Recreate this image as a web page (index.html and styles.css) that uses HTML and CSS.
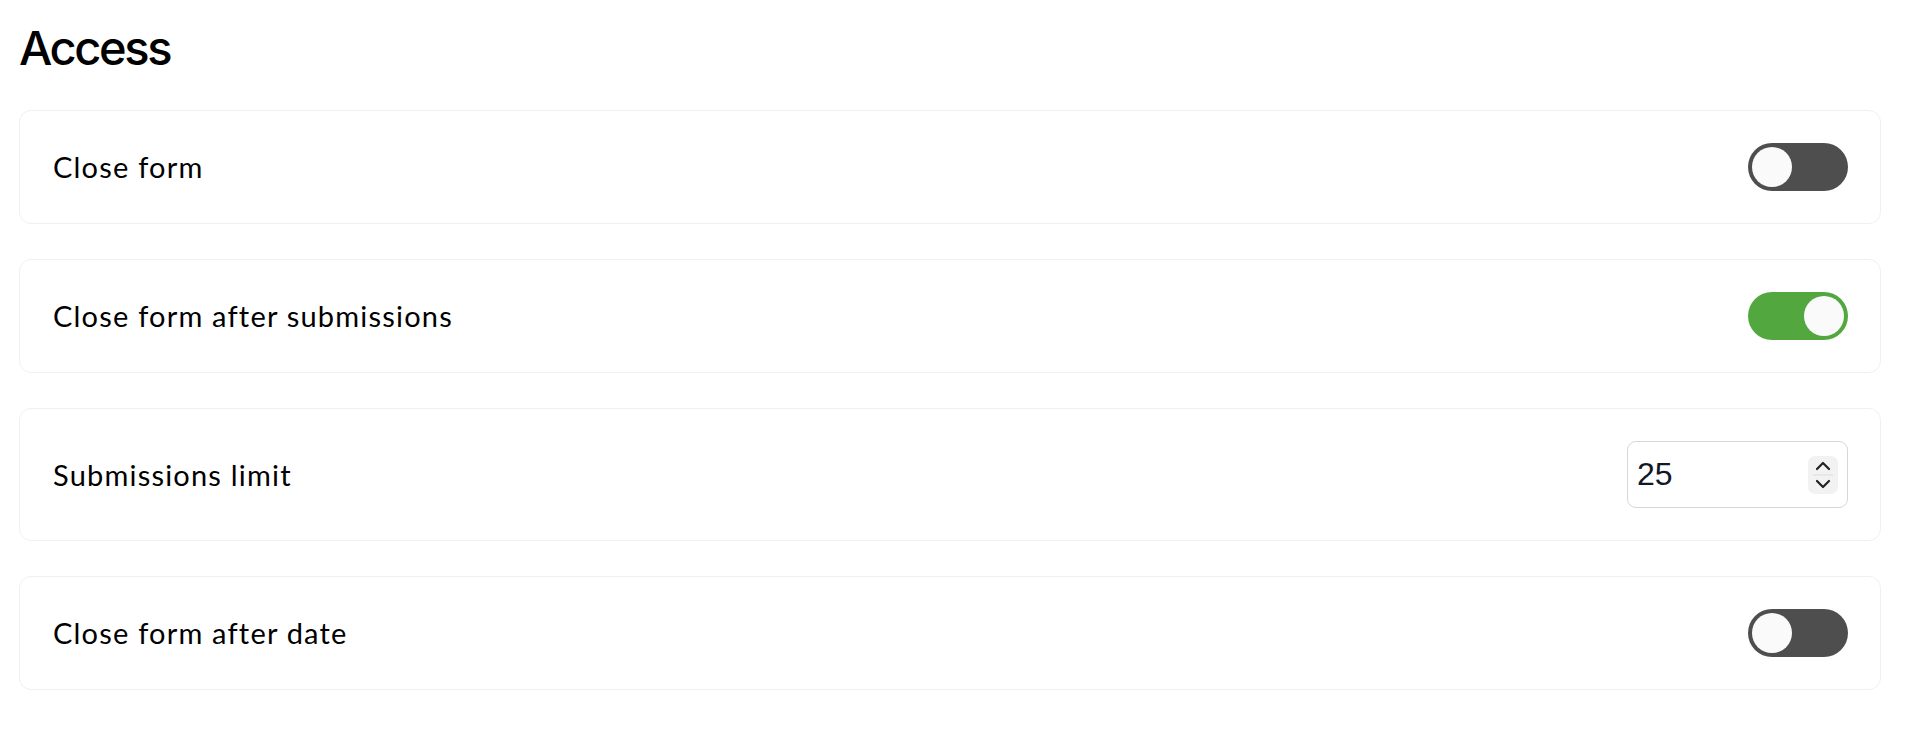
FILE: index.html
```html
<!DOCTYPE html>
<html lang="en">
<head>
<meta charset="utf-8">
<title>Access</title>
<link rel="stylesheet" href="styles.css">
</head>
<body>
<main class="page">
  <h1 class="title">Access</h1>
  <div class="list">
    <div class="card">
      <span class="label">Close form</span>
      <span class="toggle"><span class="knob"></span></span>
    </div>
    <div class="card">
      <span class="label">Close form after submissions</span>
      <span class="toggle on"><span class="knob"></span></span>
    </div>
    <div class="card">
      <span class="label">Submissions limit</span>
      <div class="number">
        <span class="value">25</span>
        <span class="spin">
          <svg width="30" height="38" viewBox="0 0 30 38">
            <path d="M9 13 L15 7 L21 13" fill="none" stroke="#222" stroke-width="2.2" stroke-linecap="round" stroke-linejoin="round"/>
            <line x1="5" y1="19" x2="25" y2="19" stroke="#dcdcdc" stroke-width="1"/>
            <path d="M9 25 L15 31 L21 25" fill="none" stroke="#222" stroke-width="2.2" stroke-linecap="round" stroke-linejoin="round"/>
          </svg>
        </span>
      </div>
    </div>
    <div class="card">
      <span class="label">Close form after date</span>
      <span class="toggle"><span class="knob"></span></span>
    </div>
  </div>
</main>
</body>
</html>
```

FILE: styles.css
```css
* { box-sizing: border-box; }
html, body { margin: 0; background: #ffffff; }
body { font-family: "Lato", "Noto Sans", sans-serif; color: #000; }
.page { padding: 19px 39px 0 19px; }
.title {
  font-family: "Inter", "Liberation Sans", sans-serif;
  font-weight: 500;
  font-size: 47px;
  letter-spacing: -2.4px;
  line-height: 58px;
  margin: 0 0 33px 0;
}
.list { display: flex; flex-direction: column; gap: 35px; }
.card {
  display: flex;
  align-items: center;
  justify-content: space-between;
  border: 1px solid #f0f0f0;
  border-radius: 12px;
  padding: 32px 32px 32px 33px;
}
.label { font-size: 29px; line-height: 36px; letter-spacing: 1.2px; }
.toggle {
  width: 100px;
  height: 48px;
  border-radius: 24px;
  background: #4e4e4e;
  display: flex;
  align-items: center;
  padding: 0 4px;
}
.toggle.on { background: #52a83f; justify-content: flex-end; }
.knob { width: 40px; height: 40px; border-radius: 50%; background: #fafafa; }
.number {
  width: 221px;
  height: 67px;
  border: 1.5px solid #d4d6dc;
  border-radius: 9px;
  display: flex;
  align-items: center;
  justify-content: space-between;
  padding: 0 9px 0 9px;
}
.value { font-family: "Liberation Sans", Arial, sans-serif; font-size: 32px; color: #111827; }
.spin { width: 30px; height: 38px; background: #f2f2f2; border-radius: 7px; display: flex; }
```
